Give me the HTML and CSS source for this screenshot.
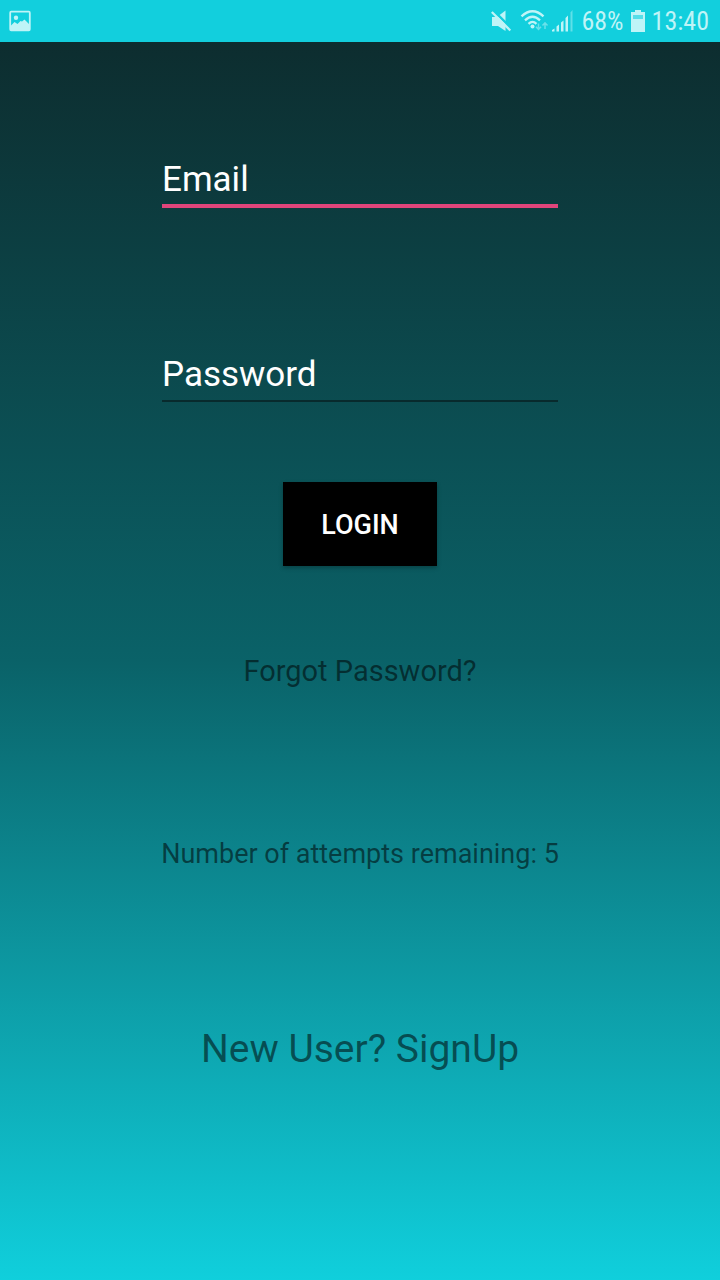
FILE: index.html
```html
<!DOCTYPE html>
<html lang="en">
<head>
<meta charset="utf-8">
<meta name="viewport" content="width=device-width, initial-scale=1">
<title>Login</title>
<link rel="stylesheet" href="styles.css">
</head>
<body>
<header class="status">
  <svg class="picture" width="22" height="22" viewBox="0 0 22 22" aria-hidden="true">
    <rect x="1.2" y="1.7" width="19.6" height="18.6" rx="1" fill="none" stroke="currentColor" stroke-width="1.8"/>
    <circle cx="7" cy="7.7" r="2.2"/>
    <path d="M2 15.500 5.500 12 8.500 14 11.500 11 13 11.500 15.500 9.500 20 14V20H2Z"/>
  </svg>
  <div class="indicators">
    <svg class="mute" width="22" height="24" viewBox="0 0 22 24" aria-hidden="true">
      <path d="M1 8H6L14.500 1.500V22L7 17H1Z"/>
      <path d="M1 0 22 21" stroke="#12cfdd" stroke-width="2.500"/>
      <path d="M.8 3 19.300 21.500" stroke="currentColor" stroke-width="2.300"/>
    </svg>
    <svg class="wifi" width="30" height="24" viewBox="0 0 30 24" aria-hidden="true">
      <g fill="none" stroke="currentColor" stroke-width="2.300">
        <path d="M1.500 7.300Q12.500-2.900 23.500 7.300"/>
        <path d="M5 11.300Q12.500 4.300 20 11.300"/>
        <path d="M8.500 14.800Q12.500 11 16.500 14.800"/>
      </g>
      <circle cx="12.500" cy="17.500" r="2"/>
      <path d="M18.500 14.500V20M16 17.800 18.500 20.500 21 17.800M25 20V14M22.500 16.500 25 13.800 27.500 16.500" fill="none" stroke="currentColor" stroke-width="1.500" opacity=".5"/>
    </svg>
    <svg class="signal" width="22" height="24" viewBox="0 0 22 24" aria-hidden="true">
      <path d="M0 22.500V21L2.500 19.500V22.500ZM4.500 22.500V17.500L7 15.500V22.500ZM9 22.500V13.500L11.500 11.500V22.500ZM13.500 22.500V9L16 6.500V22.500Z"/>
      <path d="M18.500 22.500V3.500L20.500 1V22.500Z" opacity=".45"/>
    </svg>
    <span class="percent">68%</span>
    <svg class="battery" width="14" height="24" viewBox="0 0 14 24" aria-hidden="true">
      <path d="M4 1H10V3H14V23H0V3H4Z"/>
      <path d="M2 6H12V10H2Z" fill="#12cfdd" opacity=".6"/>
    </svg>
    <time>13:40</time>
  </div>
</header>
<main class="screen">
  <form class="login">
    <input class="field focused" type="email" placeholder="Email" aria-label="Email">
    <input class="field" type="password" placeholder="Password" aria-label="Password">
    <button class="submit" type="button">LOGIN</button>
  </form>
  <a class="forgot" href="#forgot">Forgot Password?</a>
  <p class="attempts">Number of attempts remaining: 5</p>
  <a class="signup" href="#signup">New User? SignUp</a>
</main>
</body>
</html>
```
FILE: styles.css
```css
* { box-sizing: border-box; }
body {
  margin: 0;
  min-height: 100vh;
  display: flex;
  flex-direction: column;
  font-family: Roboto, sans-serif;
}
.status {
  height: 42px;
  padding: 0 11px 0 9px;
  display: flex;
  align-items: center;
  justify-content: space-between;
  background: #12cfdd;
  color: #bff4f7;
  font-family: "Roboto Condensed", Roboto, sans-serif;
  font-size: 26px;
  line-height: 44px;
}
.status svg { fill: currentColor; flex: none; }
.indicators { display: flex; align-items: center; gap: 7px; }
.wifi { margin-right: -5px; }
.screen {
  flex: 1;
  display: flex;
  flex-direction: column;
  align-items: center;
  padding: 112px 16px 48px;
  background: linear-gradient(#0d2d2f, #0a6268 50%, #10cfdc);
}
.login {
  width: 100%;
  display: flex;
  flex-direction: column;
  align-items: center;
}
.field {
  width: 396px;
  max-width: 100%;
  height: 54px;
  padding: 0;
  border: 0;
  border-bottom: 2px solid #082a2d;
  border-radius: 0;
  outline: 0;
  background: transparent;
  color: #fff;
  font: 35px/48px Roboto, sans-serif;
}
.field::placeholder { color: #fff; opacity: 1; }
.focused { border-bottom: 4px solid #e0457b; margin-bottom: 140px; }
.submit {
  width: 154px;
  height: 84px;
  margin-top: 80px;
  padding: 2px 0 0;
  border: 0;
  background: #000;
  color: #fff;
  font: 500 27px/32px Roboto, sans-serif;
  box-shadow: 0 2px 4px rgba(0, 0, 0, .25);
}
a { text-decoration: none; }
.forgot, .attempts, .signup { color: rgba(0, 0, 0, .54); text-align: center; }
.forgot { margin-top: 85px; font-size: 29px; line-height: 40px; }
.attempts { margin: 144px 0 0; font-size: 27px; line-height: 38px; }
.signup { margin-top: 150px; font-size: 39px; line-height: 52px; }
```
